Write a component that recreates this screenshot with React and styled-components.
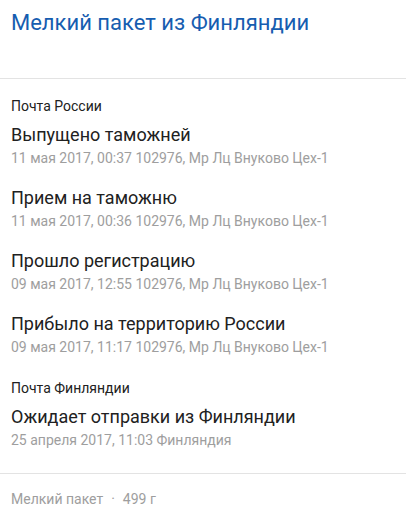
import React from "react";
import styled, { createGlobalStyle } from "styled-components";

const GlobalStyle = createGlobalStyle`
  body {
    margin: 0;
    background: #fff;
    font-family: Roboto, "Noto Sans", sans-serif;
  }
`;

const Page = styled.div`
  width: 406px;
  display: flex;
  flex-direction: column;
`;

const Header = styled.header`
  height: 79px;
  box-sizing: border-box;
  padding: 8px 11px 0;
  border-bottom: 1px solid #e3e3e3;
`;

const Title = styled.h1`
  margin: 0;
  font-size: 22px;
  font-weight: 400;
  line-height: 30px;
  color: #165db0;
`;

const Body = styled.div`
  display: flex;
  flex-direction: column;
  padding: 19px 11px 24px;
  gap: 24px;
  border-bottom: 1px solid #e3e3e3;
`;

const Section = styled.section`
  display: flex;
  flex-direction: column;
`;

const Carrier = styled.div`
  font-size: 14px;
  line-height: 16px;
  color: #212121;
  margin-bottom: 9px;
`;

const Events = styled.div`
  display: flex;
  flex-direction: column;
  gap: 19px;
`;

const Event = styled.div`
  display: flex;
  flex-direction: column;
  gap: 2px;
`;

const Status = styled.div`
  font-size: 18px;
  line-height: 24px;
  color: #212121;
`;

const Meta = styled.div`
  font-size: 14px;
  line-height: 18px;
  color: #9e9e9e;
`;

const Footer = styled.footer`
  padding: 16px 11px;
  font-size: 14px;
  line-height: 18px;
  color: #9e9e9e;
`;

const Dot = styled.span`
  margin: 0 8px;
`;

const sections = [
  {
    carrier: "Почта России",
    events: [
      { status: "Выпущено таможней", meta: "11 мая 2017, 00:37 102976, Мр Лц Внуково Цех-1" },
      { status: "Прием на таможню", meta: "11 мая 2017, 00:36 102976, Мр Лц Внуково Цех-1" },
      { status: "Прошло регистрацию", meta: "09 мая 2017, 12:55 102976, Мр Лц Внуково Цех-1" },
      { status: "Прибыло на территорию России", meta: "09 мая 2017, 11:17 102976, Мр Лц Внуково Цех-1" },
    ],
  },
  {
    carrier: "Почта Финляндии",
    events: [
      { status: "Ожидает отправки из Финляндии", meta: "25 апреля 2017, 11:03 Финляндия" },
    ],
  },
];

export default function App() {
  return (
    <>
      <GlobalStyle />
      <Page>
        <Header>
          <Title>Мелкий пакет из Финляндии</Title>
        </Header>
        <Body>
          {sections.map((s) => (
            <Section key={s.carrier}>
              <Carrier>{s.carrier}</Carrier>
              <Events>
                {s.events.map((e) => (
                  <Event key={e.status}>
                    <Status>{e.status}</Status>
                    <Meta>{e.meta}</Meta>
                  </Event>
                ))}
              </Events>
            </Section>
          ))}
        </Body>
        <Footer>
          Мелкий пакет<Dot>·</Dot>499 г
        </Footer>
      </Page>
    </>
  );
}
